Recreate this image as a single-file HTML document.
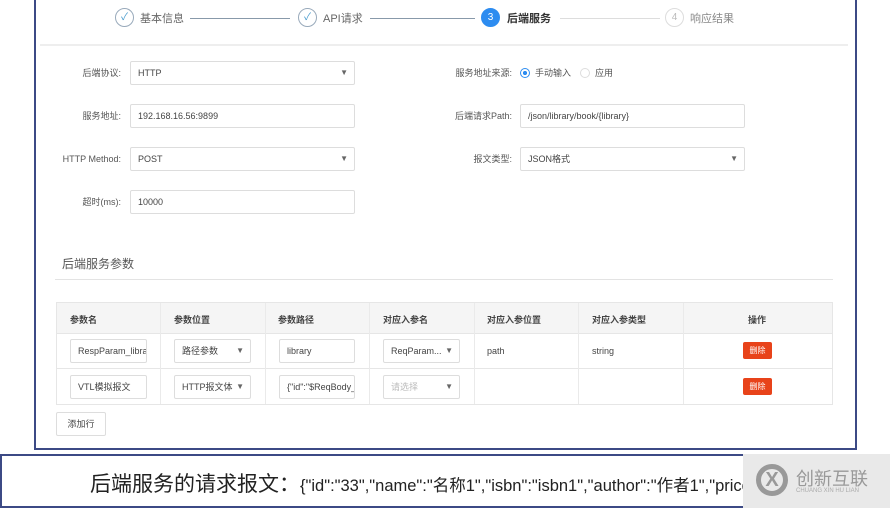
<!DOCTYPE html>
<html><head><meta charset="utf-8"><style>
*{box-sizing:border-box;margin:0;padding:0}
body{width:890px;height:508px;background:#fff;position:relative;overflow:hidden;font-family:"Liberation Sans","Noto Sans CJK SC",sans-serif;font-size:9px;color:#555}
.abs{position:absolute}
.panel{left:34px;top:-2px;width:823px;height:452px;border:2px solid #3c4a85;border-top:none}
.circ{width:19px;height:19px;border-radius:50%;border:1px solid #9ab;text-align:center;line-height:17px;font-size:10px;color:#49c}
.step{font-size:11px;color:#666}
.inp{height:24px;border:1px solid #ddd;border-radius:2px;padding-left:7px;line-height:22px;font-size:9px;color:#444;background:#fff}
.lbl{text-align:right;font-size:9px;color:#555;line-height:24px}
.arr{position:absolute;right:6px;top:0;font-size:8px;color:#666}
.th{background:#f5f5f5}
.cell{position:absolute;font-size:9px;color:#444}
.del{background:#e8431a;color:#fff;width:29px;height:17px;line-height:17px;text-align:center;font-size:8px;border-radius:2px}
</style></head><body>
<div class="abs panel"></div>
<!-- steps -->
<div class="abs circ" style="left:115px;top:8px">✓</div><div class="abs step" style="left:140px;top:10px">基本信息</div>
<div class="abs" style="left:190px;top:18px;width:100px;height:1px;background:#89a"></div>
<div class="abs circ" style="left:298px;top:8px">✓</div><div class="abs step" style="left:323px;top:10px">API请求</div>
<div class="abs" style="left:370px;top:18px;width:105px;height:1px;background:#89a"></div>
<div class="abs circ" style="left:481px;top:8px;background:#2d8cf0;border-color:#2d8cf0;color:#fff">3</div><div class="abs step" style="left:507px;top:10px;color:#333;font-weight:bold">后端服务</div>
<div class="abs" style="left:560px;top:18px;width:100px;height:1px;background:#ddd"></div>
<div class="abs circ" style="left:665px;top:8px;border-color:#ddd;color:#bbb">4</div><div class="abs step" style="left:690px;top:10px;color:#888">响应结果</div>
<div class="abs" style="left:40px;top:44px;width:808px;height:2px;background:#eee"></div>
<!-- form left -->
<div class="abs lbl" style="left:30px;top:61px;width:91px">后端协议:</div>
<div class="abs inp" style="left:130px;top:61px;width:225px">HTTP<span class="arr">▼</span></div>
<div class="abs lbl" style="left:30px;top:104px;width:91px">服务地址:</div>
<div class="abs inp" style="left:130px;top:104px;width:225px">192.168.16.56:9899</div>
<div class="abs lbl" style="left:30px;top:147px;width:91px">HTTP Method:</div>
<div class="abs inp" style="left:130px;top:147px;width:225px">POST<span class="arr">▼</span></div>
<div class="abs lbl" style="left:30px;top:190px;width:91px">超时(ms):</div>
<div class="abs inp" style="left:130px;top:190px;width:225px">10000</div>
<!-- form right -->
<div class="abs lbl" style="left:420px;top:61px;width:92px">服务地址来源:</div>
<div class="abs" style="left:520px;top:68px;width:10px;height:10px;border-radius:50%;border:1px solid #2d8cf0;background:radial-gradient(#2d8cf0 35%,#fff 40%)"></div>
<div class="abs lbl" style="left:535px;top:61px;text-align:left">手动输入</div>
<div class="abs" style="left:580px;top:68px;width:10px;height:10px;border-radius:50%;border:1px solid #ddd"></div>
<div class="abs lbl" style="left:595px;top:61px;text-align:left">应用</div>
<div class="abs lbl" style="left:420px;top:104px;width:92px">后端请求Path:</div>
<div class="abs inp" style="left:520px;top:104px;width:225px">/json/library/book/{library}</div>
<div class="abs lbl" style="left:420px;top:147px;width:92px">报文类型:</div>
<div class="abs inp" style="left:520px;top:147px;width:225px">JSON格式<span class="arr">▼</span></div>
<!-- section -->
<div class="abs" style="left:62px;top:255px;font-size:12px;color:#555">后端服务参数</div>
<div class="abs" style="left:55px;top:279px;width:778px;height:1px;background:#e3e3e3"></div>
<!-- table -->
<div class="abs" style="left:56px;top:302px;width:777px;height:103px;border:1px solid #e6e6e6"></div>
<div class="abs th" style="left:57px;top:303px;width:775px;height:30px"></div>
<div class="abs" style="left:57px;top:333px;width:775px;height:1px;background:#e6e6e6"></div>
<div class="abs" style="left:57px;top:368px;width:775px;height:1px;background:#e6e6e6"></div>
<div class="abs" style="left:160px;top:303px;width:1px;height:101px;background:#eaeaea"></div>
<div class="abs" style="left:265px;top:303px;width:1px;height:101px;background:#eaeaea"></div>
<div class="abs" style="left:369px;top:303px;width:1px;height:101px;background:#eaeaea"></div>
<div class="abs" style="left:474px;top:303px;width:1px;height:101px;background:#eaeaea"></div>
<div class="abs" style="left:578px;top:303px;width:1px;height:101px;background:#eaeaea"></div>
<div class="abs" style="left:683px;top:303px;width:1px;height:101px;background:#eaeaea"></div>
<div class="cell" style="left:70px;top:313px;font-weight:bold">参数名</div>
<div class="cell" style="left:174px;top:313px;font-weight:bold">参数位置</div>
<div class="cell" style="left:278px;top:313px;font-weight:bold">参数路径</div>
<div class="cell" style="left:383px;top:313px;font-weight:bold">对应入参名</div>
<div class="cell" style="left:487px;top:313px;font-weight:bold">对应入参位置</div>
<div class="cell" style="left:592px;top:313px;font-weight:bold">对应入参类型</div>
<div class="cell" style="left:748px;top:313px;font-weight:bold">操作</div>
<div class="abs inp" style="left:70px;top:339px;width:77px;overflow:hidden;white-space:nowrap">RespParam_library</div>
<div class="abs inp" style="left:174px;top:339px;width:77px">路径参数<span class="arr">▼</span></div>
<div class="abs inp" style="left:279px;top:339px;width:76px">library</div>
<div class="abs inp" style="left:383px;top:339px;width:77px">ReqParam...<span class="arr">▼</span></div>
<div class="cell" style="left:487px;top:346px">path</div>
<div class="cell" style="left:592px;top:346px">string</div>
<div class="abs del" style="left:743px;top:342px">删除</div>
<div class="abs inp" style="left:70px;top:375px;width:77px">VTL模拟报文</div>
<div class="abs inp" style="left:174px;top:375px;width:77px">HTTP报文体<span class="arr">▼</span></div>
<div class="abs inp" style="left:279px;top:375px;width:76px;overflow:hidden;white-space:nowrap">{"id":"$ReqBody_id"}</div>
<div class="abs inp" style="left:383px;top:375px;width:77px;color:#bbb">请选择<span class="arr">▼</span></div>
<div class="abs del" style="left:743px;top:378px">删除</div>
<div class="abs inp" style="left:56px;top:412px;width:50px;height:24px;text-align:center;padding:0">添加行</div>
<!-- bottom -->
<div class="abs" style="left:0;top:454px;width:890px;height:54px;border:2px solid #3c4a85;border-right:none;background:#fff"></div>
<div class="abs" style="left:90px;top:468px;font-size:21px;color:#222;white-space:nowrap">后端服务的请求报文：<span style="font-size:16.5px">{"id":"33","name":"名称1","isbn":"isbn1","author":"作者1","price</span></div>
<div class="abs" style="left:743px;top:454px;width:147px;height:54px;background:#e9e9e9"></div>
<div class="abs" style="left:756px;top:464px;width:32px;height:32px;border-radius:50%;border:5px solid #999;color:#999;font-size:20px;line-height:22px;text-align:center;font-weight:bold">X</div>
<div class="abs" style="left:796px;top:465px;font-size:18px;color:#999">创新互联</div>
<div class="abs" style="left:796px;top:488px;font-size:6px;color:#aaa">CHUANG XIN HU LIAN</div>
</body></html>
